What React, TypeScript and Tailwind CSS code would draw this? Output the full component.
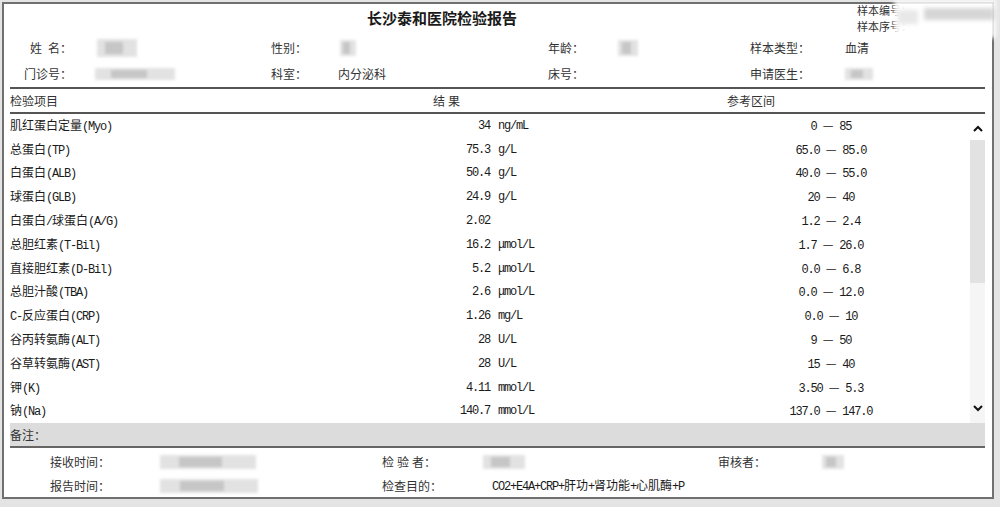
import React from 'react'

const cjk = "font-['Noto_Sans_CJK_SC',sans-serif]"
const mono = "font-['Liberation_Mono','Noto_Sans_CJK_SC',monospace] text-[12px] tracking-[-1.2px]"

const rows: [string, string, string, string, string][] = [
  ['肌红蛋白定量(Myo)', '34', 'ng/mL', '0', '85'],
  ['总蛋白(TP)', '75.3', 'g/L', '65.0', '85.0'],
  ['白蛋白(ALB)', '50.4', 'g/L', '40.0', '55.0'],
  ['球蛋白(GLB)', '24.9', 'g/L', '20', '40'],
  ['白蛋白/球蛋白(A/G)', '2.02', '', '1.2', '2.4'],
  ['总胆红素(T-Bil)', '16.2', 'μmol/L', '1.7', '26.0'],
  ['直接胆红素(D-Bil)', '5.2', 'μmol/L', '0.0', '6.8'],
  ['总胆汁酸(TBA)', '2.6', 'μmol/L', '0.0', '12.0'],
  ['C-反应蛋白(CRP)', '1.26', 'mg/L', '0.0', '10'],
  ['谷丙转氨酶(ALT)', '28', 'U/L', '9', '50'],
  ['谷草转氨酶(AST)', '28', 'U/L', '15', '40'],
  ['钾(K)', '4.11', 'mmol/L', '3.50', '5.3'],
  ['钠(Na)', '140.7', 'mmol/L', '137.0', '147.0'],
]

// split text into ascii runs (mono) and CJK runs
function Mixed({ text }: { text: string }) {
  const parts = text.match(/[\x00-\x7F\u00B5\u03BC]+|[^\x00-\x7F\u00B5\u03BC]+/g) || []
  return (
    <>
      {parts.map((p, i) =>
        /^[\x00-\x7F\u00B5\u03BC]+$/.test(p) ? (
          <span key={i} className={mono}>{p}</span>
        ) : (
          <span key={i} className={`${cjk} text-[12px]`}>{p}</span>
        )
      )}
    </>
  )
}

function Blur({ w, h = 16, className = '' }: { w: number; h?: number; className?: string }) {
  return (
    <div
      className={`relative bg-[#e2e2e2] blur-[1.5px] ${className}`}
      style={{ width: w, height: h }}
    >
      <div className="absolute left-[20%] top-[15%] h-[70%] w-[45%] bg-[#c6c6c6]" />
    </div>
  )
}

function Chevron({ down = false }: { down?: boolean }) {
  return (
    <svg width="10" height="7" viewBox="0 0 10 7" className={down ? 'rotate-180' : ''}>
      <polyline points="1,6 5,2 9,6" fill="none" stroke="#111" strokeWidth="2" />
    </svg>
  )
}

export default function App() {
  const label = `${cjk} text-[12px] text-[#333]`
  return (
    <div className="w-[1000px] h-[507px] bg-[#e4e4e4] pt-[2px] pl-[2px] overflow-hidden">
      <div className="relative w-[992px] h-[497px] bg-white border-2 border-[#707070] flex flex-col text-[#1a1a1a]">
        {/* blurred sample number */}
        <div className="absolute -top-[4px] left-[890px] w-[102px] h-[38px] bg-white/90 blur-[2px]">
          <div className="absolute left-[30px] top-[8px] h-[12px] w-[70px] bg-[#d6d6d6]" />
          <div className="absolute left-[4px] top-[10px] h-[14px] w-[20px] bg-[#e8e8e8]" />
        </div>

        {/* title */}
        <div className="grid grid-cols-[849px_1fr] h-[28px]">
          <div className={`${cjk} pl-[363px] text-[15px] font-bold leading-[28px]`}>长沙泰和医院检验报告</div>
          <div className={`${cjk} text-[11px] leading-[16px] text-[#333] pl-[4px] -mt-[2px]`}>
            <div>样本编号：</div>
            <div>样本序号：</div>
          </div>
        </div>

        {/* patient info */}
        <div className="mt-[3px] grid grid-cols-[68px_199px_67px_210px_70px_132px_95px_1fr] items-center h-[26px]">
          <div className={`${label} text-right`}>姓&#8194;名：</div>
          <div className="pl-[25px]"><Blur w={40} h={18} /></div>
          <div className={label}>性别：</div>
          <div className="pl-[2px]"><Blur w={16} h={16} /></div>
          <div className={label}>年龄：</div>
          <div><Blur w={20} h={16} /></div>
          <div className={label}>样本类型：</div>
          <div className={label}>血清</div>
        </div>
        <div className="grid grid-cols-[68px_199px_67px_210px_70px_132px_95px_1fr] items-center h-[26px]">
          <div className={`${label} text-right`}>门诊号：</div>
          <div className="pl-[23px]"><Blur w={80} h={12} /></div>
          <div className={label}>科室：</div>
          <div className={label}>内分泌科</div>
          <div className={label}>床号：</div>
          <div />
          <div className={label}>申请医生：</div>
          <div><Blur w={28} h={12} /></div>
        </div>

        <div className="mx-[6px] mr-[7px] h-[2px] bg-[#555]" />
        <div className="mx-[6px] mr-[7px] grid grid-cols-[390px_90px_210px_1fr] items-center h-[23px]">
          <div className={label}>检验项目</div>
          <div className={`${label} pl-[33px]`}>结&#8197;果</div>
          <div />
          <div className={`${label} pl-[27px]`}>参考区间</div>
        </div>
        <div className="mx-[6px] mr-[7px] h-[2px] bg-[#555]" />

        {/* results list */}
        <div className="mx-[6px] mr-[7px] flex">
          <div className="w-[960px]">
            {rows.map(([name, val, unit, lo, hi]) => (
              <div key={name} className="grid grid-cols-[390px_90px_210px_262px] items-center h-[23.8px] leading-[16px]">
                <div className="flex items-baseline"><Mixed text={name} /></div>
                <div className={`${mono} text-right`}>{val}</div>
                <div className={`${mono} pl-[8px]`}>{unit}</div>
                <div className="flex items-baseline justify-center">
                  <span className={mono}>{lo}</span>
                  <span className={`${cjk} text-[12px] mx-[6px]`}>—</span>
                  <span className={mono}>{hi}</span>
                </div>
              </div>
            ))}
          </div>
          <div className="w-[15px] bg-[#f5f5f5] flex flex-col items-center">
            <div className="h-[26px] w-full bg-white flex items-center justify-center pt-[2px]">
              <Chevron />
            </div>
            <div className="h-[143px] w-full bg-[#e2e2e2]" />
            <div className="flex-1" />
            <div className="h-[24px] flex items-center justify-center pb-[6px]">
              <Chevron down />
            </div>
          </div>
        </div>

        {/* remarks */}
        <div className="mx-[6px] mr-[7px] h-[24.6px] bg-[#dcdcdc] border-b-2 border-[#666] flex items-center">
          <span className={label}>备注：</span>
        </div>

        {/* footer */}
        <div className="grid grid-cols-[46px_110px_222px_100px_236px_104px_1fr] items-center h-[28px]">
          <div />
          <div className={label}>接收时间：</div>
          <div><Blur w={96} h={14} /></div>
          <div className={label}>检&#8197;验&#8197;者：</div>
          <div className="pl-[1px]"><Blur w={42} h={14} /></div>
          <div className={label}>审核者：</div>
          <div><Blur w={22} h={14} /></div>
        </div>
        <div className="grid grid-cols-[46px_110px_222px_100px_1fr] items-center h-[20px]">
          <div />
          <div className={label}>报告时间：</div>
          <div><Blur w={98} h={14} /></div>
          <div className={label}>检查目的：</div>
          <div className="pl-[10px] flex items-baseline"><Mixed text="CO2+E4A+CRP+肝功+肾功能+心肌酶+P" /></div>
        </div>
      </div>
    </div>
  )
}
